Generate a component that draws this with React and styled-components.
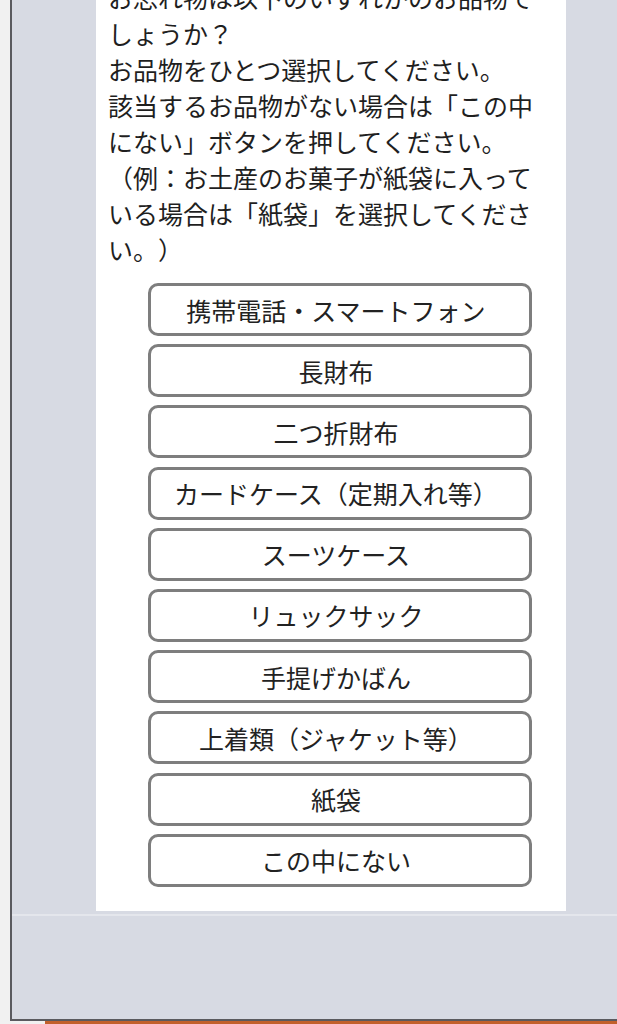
import React from "react";
import styled, { createGlobalStyle } from "styled-components";

const GlobalStyle = createGlobalStyle`
	html, body {
		margin: 0;
		padding: 0;
		background: #f1f1f1;
		overflow: hidden;
	}
	body {
		font-family: "Noto Sans CJK JP", "Noto Sans", sans-serif;
		color: #1f1f1f;
		text-spacing-trim: space-all;
	}
`;

const items = [
	"携帯電話・スマートフォン",
	"長財布",
	"二つ折財布",
	"カードケース（定期入れ等）",
	"スーツケース",
	"リュックサック",
	"手提げかばん",
	"上着類（ジャケット等）",
	"紙袋",
	"この中にない",
];

const App = () => {
	return (
		<>
			<GlobalStyle />
			<Page>
				<Frame>
					<Main>
						<Panel>
							<Question>
								お忘れ物は以下のいずれかのお品物でしょうか？
								<br />
								お品物をひとつ選択してください。
								<br />
								該当するお品物がない場合は「この中にない」ボタンを押してください。
								<br />
								（例：お土産のお菓子が紙袋に入っている場合は「紙袋」を選択してください。）
							</Question>
							<ChoiceList>
								{items.map((label) => (
									<ChoiceButton key={label} type="button">
										{label}
									</ChoiceButton>
								))}
							</ChoiceList>
						</Panel>
					</Main>
					<Footer />
				</Frame>
				<AccentBar />
			</Page>
		</>
	);
};

export default App;

const Page = styled.div`
	width: 617px;
	height: 1024px;
	overflow: hidden;
	background: #f1f1f1;
`;

const Frame = styled.div`
	margin-left: 10px;
	height: 1021px;
	box-sizing: border-box;
	border-left: 2px solid #5a5a5f;
	border-bottom: 2px solid #5a5a5f;
	background: #d7dae3;
	display: flex;
	flex-direction: column;
	overflow: hidden;
`;

const Main = styled.section`
	padding: 0 0 3px 84px;
	border-bottom: 2px solid #e4e6ec;
`;

const Panel = styled.div`
	margin-top: -21px;
	width: 470px;
	box-sizing: border-box;
	padding: 0 12px 24px;
	background: #ffffff;
`;

const Question = styled.p`
	margin: 0;
	font-size: 25px;
	line-height: 36px;
	color: #1f1f1f;
	line-break: strict;
	text-spacing-trim: space-all;
`;

const ChoiceList = styled.div`
	margin: 16px 0 0 40px;
	width: 384px;
	display: flex;
	flex-direction: column;
	gap: 8.2px;
`;

const ChoiceButton = styled.button`
	height: 53px;
	box-sizing: border-box;
	border: 3px solid #7e7e7e;
	border-radius: 10px;
	background: #ffffff;
	font-family: "Noto Sans CJK JP", "Noto Sans", sans-serif;
	font-size: 25px;
	color: #222222;
	padding: 0 8px 0 0;
	display: flex;
	align-items: center;
	justify-content: center;
	text-spacing-trim: space-all;
	cursor: pointer;
`;

const Footer = styled.div`
	flex: 1;
	background: #d7dae3;
`;

const AccentBar = styled.div`
	margin-left: 45px;
	height: 3px;
	background: #c2602b;
`;
